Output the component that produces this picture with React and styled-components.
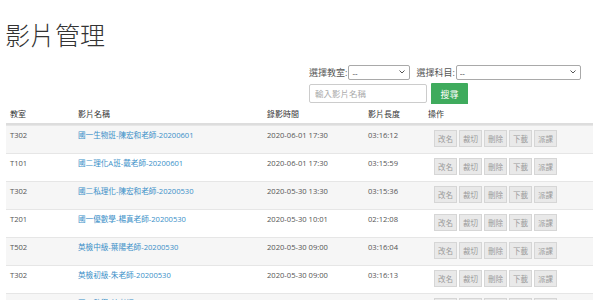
import React from 'react';
import styled, { createGlobalStyle } from 'styled-components';

const GlobalStyle = createGlobalStyle`
    body {
        margin: 0;
        background: #fff;
        font-family: 'Open Sans', 'Noto Sans CJK TC', sans-serif;
        color: #555;
    }
`;

const Page = styled.div`
    display: flex;
    flex-direction: column;
    padding: 0 7px 0 6px;
`;
const Title = styled.h1`
    margin: 22px 0 0 -1px;
    font-family: 'Noto Sans CJK TC', sans-serif;
    font-size: 25px;
    line-height: 25px;
    font-weight: 300;
    color: #333;
`;
const SearchForm = styled.form`
    align-self: flex-end;
    display: flex;
    flex-direction: column;
    gap: 3px;
    margin: 18px 12px 0 0;
    width: 272px;
`;
const FormRow = styled.div`
    display: flex;
    align-items: stretch;
    height: ${props => props.height}px;
    gap: ${props => props.gap || 0}px;
`;
const Label = styled.label`
    display: flex;
    align-items: center;
    font-size: 9px;
    color: #555;
    margin: 0 1px 0 ${props => props.indent || 0}px;
`;
const SelectBox = styled.div`
    position: relative;
    display: flex;
    width: ${props => (props.width ? `${props.width}px` : 'auto')};
    flex: ${props => (props.width ? 'none' : 1)};
`;
const NativeSelect = styled.select`
    appearance: none;
    box-sizing: border-box;
    display: block;
    width: 100%;
    height: 100%;
    margin: 0;
    padding: 0 0 0 3px;
    border: 1px solid #a9a9a9;
    border-radius: 2px;
    background: #fff;
    font-family: inherit;
    font-size: 8px;
    line-height: 13px;
    color: #333;
`;
const Chevron = styled.svg`
    position: absolute;
    right: 5px;
    top: 5px;
    pointer-events: none;
`;
const TextInput = styled.input`
    box-sizing: border-box;
    width: 118px;
    height: 19px;
    margin: 1px 0 0;
    padding: 0 5px;
    border: 1px solid #ccc;
    border-radius: 2px;
    font-family: inherit;
    font-size: 8.5px;
    color: #555;

    &::placeholder {
        color: #aaa;
    }
`;
const SearchButton = styled.button`
    width: 37px;
    height: 22px;
    margin: 0;
    padding: 0;
    border: none;
    border-radius: 1px;
    background: #3fab5d;
    color: #fff;
    font-family: inherit;
    font-size: 9px;
`;

const Table = styled.div`
    display: flex;
    flex-direction: column;
    margin-top: -1px;
`;
const Row = styled.div`
    display: grid;
    grid-template-columns: 68px 189px 101px 60px 1fr;
    height: ${props => (props.head ? 21 : 28)}px;
    border-top: ${props => (props.head ? 'none' : '1px solid #e6e6e6')};
    border-bottom: ${props => (props.head ? '2px solid #ddd' : 'none')};
    background: ${props => (props.striped ? '#f6f6f6' : '#fff')};
    box-sizing: border-box;
`;
const HeadCell = styled.div`
    padding: 5px 4px 0;
    font-size: 8px;
    line-height: 10px;
    color: #333;
`;
const Cell = styled.div`
    padding: 4px 4px 0;
    font-size: 7.6px;
    line-height: 10px;
    color: #555;
    white-space: nowrap;
`;
const VideoLink = styled.a`
    color: #3a8fc8;
    text-decoration: none;
`;
const Actions = styled.div`
    display: flex;
    gap: 2px;
    padding: 4px 0 0 10px;
`;
const ActionButton = styled.button`
    box-sizing: border-box;
    width: 23px;
    height: 17px;
    margin: 0;
    padding: 0;
    border: 1px solid #d6d6d6;
    background: #e9e9e9;
    color: #9a9a9a;
    font-family: inherit;
    font-size: 7.5px;
`;

const videos = [
    ['T302', '國一生物班-陳宏和老師-20200601', '2020-06-01 17:30', '03:16:12'],
    ['T101', '國二理化A班-戴老師-20200601', '2020-06-01 17:30', '03:15:59'],
    ['T302', '國二私理化-陳宏和老師-20200530', '2020-05-30 13:30', '03:15:36'],
    ['T201', '國一優數學-楊真老師-20200530', '2020-05-30 10:01', '02:12:08'],
    ['T502', '英檢中級-葉陽老師-20200530', '2020-05-30 09:00', '03:16:04'],
    ['T302', '英檢初級-朱老師-20200530', '2020-05-30 09:00', '03:16:13'],
    ['T101', '國二數學-林老師-20200529', '2020-05-29 17:30', '03:14:50'],
];

const actions = ['改名', '裁切', '刪除', '下載', '派課'];

const Select = ({ width }) => (
    <SelectBox width={width}>
        <NativeSelect defaultValue="">
            <option value="">--</option>
        </NativeSelect>
        <Chevron width="6" height="4" viewBox="0 0 6 4">
            <path d="M0.5 0.5 L3 3 L5.5 0.5" fill="none" stroke="#555" strokeWidth="1" />
        </Chevron>
    </SelectBox>
);

const App = () => (
    <Page>
        <GlobalStyle />
        <Title>影片管理</Title>
        <SearchForm onSubmit={e => e.preventDefault()}>
            <FormRow height={15}>
                <Label>選擇教室:</Label>
                <Select width={62} />
                <Label indent={6}>選擇科目:</Label>
                <Select />
            </FormRow>
            <FormRow height={22} gap={4}>
                <TextInput placeholder="輸入影片名稱" />
                <SearchButton type="submit">搜尋</SearchButton>
            </FormRow>
        </SearchForm>
        <Table>
            <Row head>
                <HeadCell>教室</HeadCell>
                <HeadCell>影片名稱</HeadCell>
                <HeadCell>錄影時間</HeadCell>
                <HeadCell>影片長度</HeadCell>
                <HeadCell>操作</HeadCell>
            </Row>
            {videos.map(([room, name, time, length], i) => (
                <Row key={i} striped={i % 2 === 0}>
                    <Cell>{room}</Cell>
                    <Cell>
                        <VideoLink href="#">{name}</VideoLink>
                    </Cell>
                    <Cell>{time}</Cell>
                    <Cell>{length}</Cell>
                    <Actions>
                        {actions.map(a => (
                            <ActionButton key={a}>{a}</ActionButton>
                        ))}
                    </Actions>
                </Row>
            ))}
        </Table>
    </Page>
);

export default App;
